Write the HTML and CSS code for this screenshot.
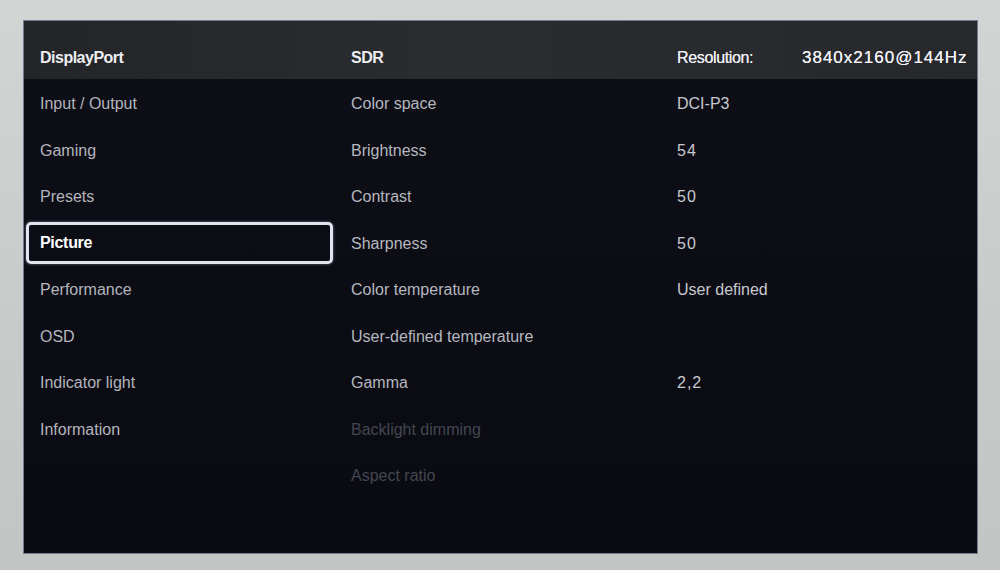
FILE: index.html
```html
<!DOCTYPE html>
<html>
<head>
<meta charset="utf-8">
<link rel="stylesheet" href="styles.css">
</head>
<body>
<div class="screen">
  <div class="header">
    <div class="h-left">DisplayPort</div>
    <div class="h-mid">SDR</div>
    <div class="h-val">
      <span class="res-label">Resolution:</span>
      <span class="res-value">3840x2160@144Hz</span>
    </div>
  </div>
  <div class="body">
    <ul class="menu">
      <li class="item">Input / Output</li>
      <li class="item">Gaming</li>
      <li class="item">Presets</li>
      <li class="item selected"><span class="sel-box">Picture</span></li>
      <li class="item">Performance</li>
      <li class="item">OSD</li>
      <li class="item">Indicator light</li>
      <li class="item">Information</li>
    </ul>
    <div class="settings">
      <div class="row"><span class="name">Color space</span><span class="value">DCI-P3</span></div>
      <div class="row"><span class="name">Brightness</span><span class="value num">54</span></div>
      <div class="row"><span class="name">Contrast</span><span class="value num">50</span></div>
      <div class="row"><span class="name">Sharpness</span><span class="value num">50</span></div>
      <div class="row"><span class="name">Color temperature</span><span class="value">User defined</span></div>
      <div class="row"><span class="name">User-defined temperature</span><span class="value"></span></div>
      <div class="row"><span class="name">Gamma</span><span class="value num">2,2</span></div>
      <div class="row disabled"><span class="name">Backlight dimming</span><span class="value"></span></div>
      <div class="row disabled"><span class="name">Aspect ratio</span><span class="value"></span></div>
    </div>
  </div>
</div>
</body>
</html>
```

FILE: styles.css
```css
html, body {
  margin: 0;
  padding: 0;
}
body {
  width: 1000px;
  height: 570px;
  background: linear-gradient(180deg, #d3d5d4 0%, #c8cac9 60%, #c3c5c4 100%);
  font-family: "Liberation Sans", Arial, sans-serif;
  padding: 21px 23px 17px 24px;
  box-sizing: border-box;
  overflow: hidden;
}
.screen {
  width: 953px;
  height: 532px;
  background: #0b0c13;
  display: flex;
  flex-direction: column;
  box-shadow: 0 0 0 1px #7a7890;
}
.header {
  height: 58px;
  flex: none;
  display: grid;
  grid-template-columns: 311px 326px 1fr;
  align-items: end;
  padding-bottom: 11px;
  box-sizing: border-box;
  background: linear-gradient(90deg, #242529 0%, #2b2c30 45%, #27282c 100%);
  color: #ededf2;
  font-size: 16px;
  line-height: 20px;
  font-weight: bold;
}
.h-left, .h-mid {
  padding-left: 16px;
  letter-spacing: -0.5px;
}
.h-val {
  padding-left: 16px;
  display: flex;
  align-items: baseline;
}
.res-label {
  width: 125px;
  font-weight: normal;
  letter-spacing: -0.35px;
  text-shadow: 0 0 0.6px #ededf2;
}
.res-value {
  font-weight: normal;
  font-size: 17px;
  letter-spacing: 1px;
  color: #f2f2f6;
  text-shadow: 0 0 0.6px #f2f2f6;
}
.body {
  flex: 1;
  display: grid;
  grid-template-columns: 311px 1fr;
  padding-top: 2px;
  background: linear-gradient(180deg, #0d0e16 0%, #0a0b12 100%);
}
.menu {
  list-style: none;
  margin: 0;
  padding: 0;
}
.item {
  height: 46.5px;
  display: flex;
  align-items: center;
  padding-left: 16px;
  color: #b4b5bd;
  font-size: 16px;
  box-sizing: border-box;
}
.item.selected {
  padding: 1px 2px 3px 2px;
}
.sel-box {
  flex: 1;
  height: 100%;
  box-sizing: border-box;
  border: 3px solid #e4e4ee;
  border-radius: 5px;
  display: flex;
  align-items: center;
  padding-left: 11px;
  color: #ffffff;
  font-weight: bold;
  letter-spacing: -0.3px;
  box-shadow: 0 0 3px rgba(220, 220, 255, 0.5);
}
.row {
  height: 46.5px;
  display: grid;
  grid-template-columns: 326px 1fr;
  align-items: center;
  font-size: 16px;
  color: #b6b7bf;
}
.name {
  padding-left: 16px;
}
.value {
  padding-left: 16px;
  color: #c8c9d0;
}
.num {
  letter-spacing: 1px;
}
.row.disabled {
  color: #444650;
}
```
